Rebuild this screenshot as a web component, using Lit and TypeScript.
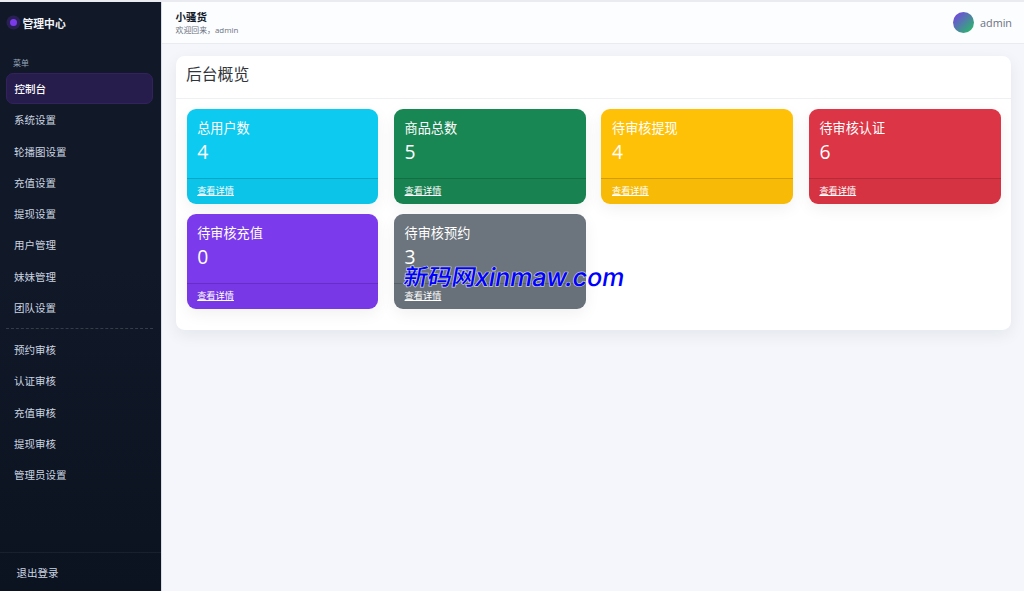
import { LitElement, html, css } from "lit";
import { customElement } from "lit/decorators.js";
import { classMap } from "lit/directives/class-map.js";

const PRIMARY = ["控制台", "系统设置", "轮播图设置", "充值设置", "提现设置", "用户管理", "妹妹管理", "团队设置"];
const REVIEW = ["预约审核", "认证审核", "充值审核", "提现审核", "管理员设置"];

const STATS = [
  { label: "总用户数", value: 4, tone: "cyan" },
  { label: "商品总数", value: 5, tone: "green" },
  { label: "待审核提现", value: 4, tone: "yellow" },
  { label: "待审核认证", value: 6, tone: "red" },
  { label: "待审核充值", value: 0, tone: "purple" },
  { label: "待审核预约", value: 3, tone: "gray" },
];

@customElement("app-sidebar")
class AppSidebar extends LitElement {
  static styles = css`
    :host {
      display: flex;
      flex-direction: column;
      width: 161px;
      flex: none;
      box-sizing: border-box;
      background: linear-gradient(180deg, #111827 0%, #111827 45%, #0b1220 100%);
      color: #cbd5e1;
      font-size: 10.5px;
    }
    .brand {
      display: flex;
      align-items: center;
      gap: 6px;
      height: 41px;
      padding-left: 10px;
      color: #f1f5f9;
      font-weight: 700;
      font-size: 10.8px;
    }
    .brand-name {
      margin-left: -0.5px;
    }
    .dot {
      width: 7px;
      height: 7px;
      border-radius: 50%;
      background: #7c3aed;
      box-shadow: 0 0 0 3.5px rgba(124, 58, 237, 0.22);
    }
    .nav {
      flex: 1;
      padding: 14.4px 8px 0 6px;
    }
    .caption {
      height: 16px;
      line-height: 12px;
      padding-left: 7px;
      font-size: 8px;
      color: #94a3b8;
    }
    .item {
      display: flex;
      align-items: center;
      box-sizing: border-box;
      height: 30.25px;
      margin-bottom: 1px;
      padding: 0.2px 0 0 7px;
      border: 1px solid transparent;
      border-radius: 7px;
      white-space: nowrap;
    }
    .active {
      color: #fff;
      font-weight: 500;
      padding: 0 0 0 7.5px;
      background: #261d4d;
      border-color: #34215f;
    }
    .divider {
      border-top: 1px dashed rgba(255, 255, 255, 0.16);
      margin: 5.6px 0 5.3px;
    }
    .foot {
      height: 38px;
      line-height: 40px;
      padding-left: 16.5px;
      border-top: 1px solid rgba(255, 255, 255, 0.06);
    }
  `;

  private item(label: string, active = false) {
    return html`<div class=${classMap({ item: true, active })}>${label}</div>`;
  }

  render() {
    return html`
      <div class="brand"><span class="dot"></span><span class="brand-name">管理中心</span></div>
      <div class="nav">
        <div class="caption">菜单</div>
        ${PRIMARY.map((label, i) => this.item(label, i === 0))}
        <div class="divider"></div>
        ${REVIEW.map((label) => this.item(label))}
      </div>
      <div class="foot">退出登录</div>
    `;
  }
}

@customElement("app-root")
class AppRoot extends LitElement {
  static styles = css`
    :host {
      display: flex;
      position: relative;
      box-sizing: border-box;
      width: 1024px;
      height: 591px;
      overflow: hidden;
      border-top: 2px solid #e9ebf1;
      background: #f4f6fb;
      font-family: "Open Sans", "Noto Sans CJK SC", sans-serif;
    }
    .main {
      flex: 1;
      min-width: 0;
      border-left: 1px solid #d9dce4;
    }
    .topbar {
      display: flex;
      justify-content: space-between;
      align-items: center;
      box-sizing: border-box;
      height: 41.5px;
      padding: 0 12px 0 13.5px;
      background: #fcfdff;
      border-bottom: 1px solid #e9ebf0;
    }
    .site {
      padding-top: 1px;
      font-size: 10.5px;
      line-height: 14px;
      font-weight: 700;
      color: #111827;
    }
    .welcome {
      font-size: 7.9px;
      line-height: 12px;
      color: #6b7280;
    }
    .user {
      display: flex;
      align-items: center;
      gap: 6px;
      font-size: 10.8px;
      color: #6b7280;
    }
    .avatar {
      width: 21px;
      height: 21px;
      border-radius: 50%;
      background: linear-gradient(135deg, #7c3aed, #22c55e);
    }
    .panel {
      box-sizing: border-box;
      height: 274px;
      margin: 12.5px 13px 0 14px;
      border-radius: 8.5px;
      background: #fff;
      box-shadow: 0 5px 16px rgba(17, 24, 39, 0.07);
    }
    .heading {
      box-sizing: border-box;
      height: 43px;
      padding-left: 10px;
      line-height: 36.4px;
      font-size: 15.8px;
      color: #30353b;
      border-bottom: 1px solid #eff0f2;
    }
    .grid {
      display: grid;
      grid-template-columns: repeat(4, 1fr);
      gap: 10.7px 15.6px;
      padding: 10.3px 10.5px;
    }
    .stat {
      display: flex;
      flex-direction: column;
      box-sizing: border-box;
      height: 94.3px;
      overflow: hidden;
      border-radius: 9px;
      color: #fff;
      box-shadow: 0 5px 16px rgba(17, 24, 39, 0.06);
    }
    .body {
      flex: 1;
      padding: 9.5px 11px 0 10.7px;
    }
    .label {
      font-size: 13.15px;
      line-height: 19px;
    }
    .value {
      font-size: 19.3px;
      line-height: 28px;
    }
    .more {
      box-sizing: border-box;
      height: 25.5px;
      padding-left: 10.7px;
      line-height: 24px;
      font-size: 9.2px;
      text-decoration: underline;
      background: rgba(0, 0, 0, 0.03);
      border-top: 1px solid rgba(0, 0, 0, 0.15);
    }
    .cyan { background: #0dcaf0; }
    .green { background: #198754; }
    .yellow { background: #ffc107; }
    .red { background: #dc3545; }
    .purple { background: #7c3aed; }
    .gray { background: #6c757d; }
    .watermark {
      position: absolute;
      left: 396px;
      top: 257px;
      width: 236px;
      height: 36px;
    }
    .mark {
      fill: #0000ff;
      stroke: rgba(255, 255, 255, 0.65);
      stroke-width: 1.4px;
      paint-order: stroke;
      font-family: Inter, "Noto Sans CJK SC", sans-serif;
      font-weight: 500;
    }
  `;

  render() {
    return html`
      <app-sidebar></app-sidebar>
      <div class="main">
        <div class="topbar">
          <div>
            <div class="site">小骚货</div>
            <div class="welcome">欢迎回来，admin</div>
          </div>
          <div class="user"><span class="avatar"></span><span>admin</span></div>
        </div>
        <div class="panel">
          <div class="heading">后台概览</div>
          <div class="grid">
            ${STATS.map(
              (s) => html`<div class="stat ${s.tone}">
                <div class="body">
                  <div class="label">${s.label}</div>
                  <div class="value">${s.value}</div>
                </div>
                <div class="more">查看详情</div>
              </div>`
            )}
          </div>
        </div>
      </div>
      <svg class="watermark" viewBox="0 0 236 36">
        <g class="mark" transform="translate(6.5 27) skewX(-10)">
          <text x="0" y="-1" font-size="22.5" textLength="72" lengthAdjust="spacingAndGlyphs">新码网</text>
          <text x="71.5" y="0" font-size="25" textLength="149" lengthAdjust="spacingAndGlyphs">xinmaw.com</text>
        </g>
      </svg>
    `;
  }
}
